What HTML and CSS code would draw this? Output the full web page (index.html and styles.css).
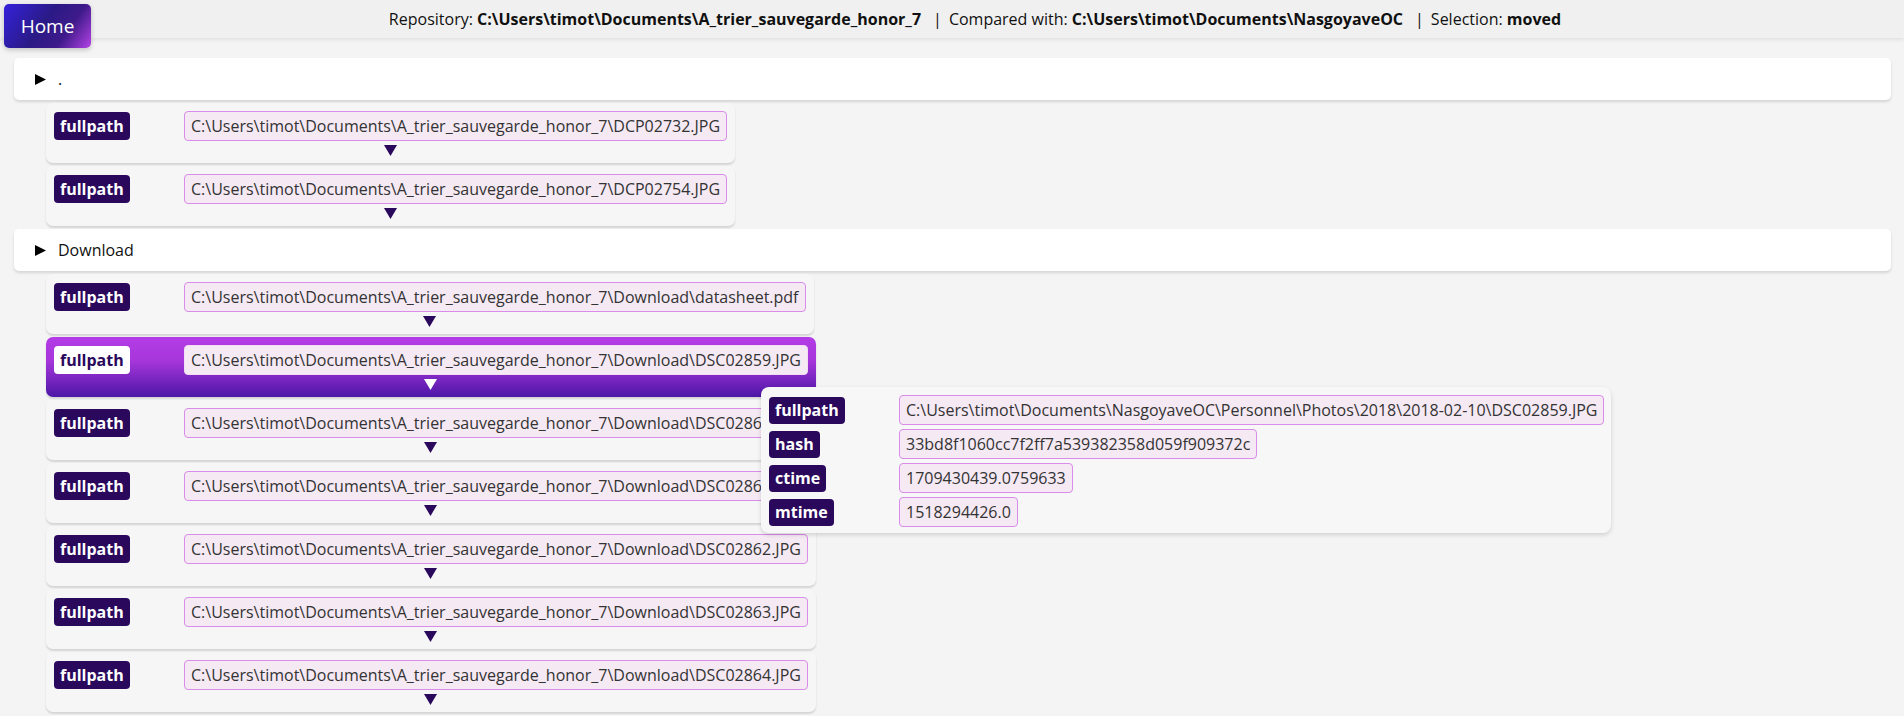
FILE: index.html
```html
<!DOCTYPE html>
<html>
<head>
<meta charset="utf-8">
<link rel="stylesheet" href="styles.css">
</head>
<body>
<header class="topbar">
  <a class="home">Home</a>
  <div class="info">
    <span>Repository: <b>C:\Users\timot\Documents\A_trier_sauvegarde_honor_7</b></span>
    <span class="sep">|</span>
    <span>Compared with: <b>C:\Users\timot\Documents\NasgoyaveOC</b></span>
    <span class="sep">|</span>
    <span>Selection: <b>moved</b></span>
  </div>
</header>
<main class="content">
  <div class="folder"><svg class="tri" viewBox="0 0 11 11" width="11" height="11"><polygon points="0,0 11,5.5 0,11" fill="#000"/></svg><span>.</span></div>
  <div class="files">
    <div class="card"><div class="row"><span class="badge">fullpath</span><span class="val">C:\Users\timot\Documents\A_trier_sauvegarde_honor_7\DCP02732.JPG</span></div><div class="arrow"><svg viewBox="0 0 13 11" width="13" height="11"><polygon points="0,0 13,0 6.5,11"/></svg></div></div>
    <div class="card"><div class="row"><span class="badge">fullpath</span><span class="val">C:\Users\timot\Documents\A_trier_sauvegarde_honor_7\DCP02754.JPG</span></div><div class="arrow"><svg viewBox="0 0 13 11" width="13" height="11"><polygon points="0,0 13,0 6.5,11"/></svg></div></div>
  </div>
  <div class="folder"><svg class="tri" viewBox="0 0 11 11" width="11" height="11"><polygon points="0,0 11,5.5 0,11" fill="#000"/></svg><span>Download</span></div>
  <div class="files">
    <div class="card"><div class="row"><span class="badge">fullpath</span><span class="val">C:\Users\timot\Documents\A_trier_sauvegarde_honor_7\Download\datasheet.pdf</span></div><div class="arrow"><svg viewBox="0 0 13 11" width="13" height="11"><polygon points="0,0 13,0 6.5,11"/></svg></div></div>
    <div class="card selected"><div class="row"><span class="badge">fullpath</span><span class="val">C:\Users\timot\Documents\A_trier_sauvegarde_honor_7\Download\DSC02859.JPG</span></div><div class="arrow"><svg viewBox="0 0 13 11" width="13" height="11"><polygon points="0,0 13,0 6.5,11"/></svg></div></div>
    <div class="card"><div class="row"><span class="badge">fullpath</span><span class="val">C:\Users\timot\Documents\A_trier_sauvegarde_honor_7\Download\DSC02860.JPG</span></div><div class="arrow"><svg viewBox="0 0 13 11" width="13" height="11"><polygon points="0,0 13,0 6.5,11"/></svg></div></div>
    <div class="card"><div class="row"><span class="badge">fullpath</span><span class="val">C:\Users\timot\Documents\A_trier_sauvegarde_honor_7\Download\DSC02861.JPG</span></div><div class="arrow"><svg viewBox="0 0 13 11" width="13" height="11"><polygon points="0,0 13,0 6.5,11"/></svg></div></div>
    <div class="card"><div class="row"><span class="badge">fullpath</span><span class="val">C:\Users\timot\Documents\A_trier_sauvegarde_honor_7\Download\DSC02862.JPG</span></div><div class="arrow"><svg viewBox="0 0 13 11" width="13" height="11"><polygon points="0,0 13,0 6.5,11"/></svg></div></div>
    <div class="card"><div class="row"><span class="badge">fullpath</span><span class="val">C:\Users\timot\Documents\A_trier_sauvegarde_honor_7\Download\DSC02863.JPG</span></div><div class="arrow"><svg viewBox="0 0 13 11" width="13" height="11"><polygon points="0,0 13,0 6.5,11"/></svg></div></div>
    <div class="card"><div class="row"><span class="badge">fullpath</span><span class="val">C:\Users\timot\Documents\A_trier_sauvegarde_honor_7\Download\DSC02864.JPG</span></div><div class="arrow"><svg viewBox="0 0 13 11" width="13" height="11"><polygon points="0,0 13,0 6.5,11"/></svg></div></div>
    <div class="card"><div class="row"><span class="badge">fullpath</span><span class="val">C:\Users\timot\Documents\A_trier_sauvegarde_honor_7\Download\DSC02865.JPG</span></div><div class="arrow"><svg viewBox="0 0 13 11" width="13" height="11"><polygon points="0,0 13,0 6.5,11"/></svg></div></div>
  </div>
  <div class="tooltip">
    <div class="row"><span class="badge">fullpath</span><span class="val">C:\Users\timot\Documents\NasgoyaveOC\Personnel\Photos\2018\2018-02-10\DSC02859.JPG</span></div>
    <div class="row"><span class="badge">hash</span><span class="val">33bd8f1060cc7f2ff7a539382358d059f909372c</span></div>
    <div class="row"><span class="badge">ctime</span><span class="val">1709430439.0759633</span></div>
    <div class="row"><span class="badge">mtime</span><span class="val">1518294426.0</span></div>
  </div>
</main>
</body>
</html>
```
FILE: styles.css
```css
html, body {
  margin: 0;
  padding: 0;
}
body {
  background: #f4f4f4;
  font-family: "Open Sans", "Noto Sans", sans-serif;
  font-size: 16px;
  color: #111;
  height: 716px;
  overflow: hidden;
}
.topbar {
  position: relative;
  height: 38px;
  background: #f0f0f0;
  box-shadow: 0 2px 4px rgba(0,0,0,0.08);
  display: flex;
  align-items: center;
  justify-content: center;
  z-index: 2;
}
.home {
  position: absolute;
  left: 4px;
  top: 4px;
  width: 87px;
  height: 44px;
  border-radius: 5px;
  background: linear-gradient(125deg, #3522dc 0%, #2a1a86 45%, #3e1a8a 70%, #b443e6 100%);
  color: #fff;
  font-size: 19px;
  display: flex;
  align-items: center;
  justify-content: center;
  box-shadow: 0 2px 5px rgba(0,0,0,0.2);
}
.info {
  display: flex;
  gap: 7px;
  padding-left: 46px;
  white-space: nowrap;
}
.info b { font-weight: 700; }
.sep { margin-left: 5px; }
.content {
  position: relative;
  padding: 20px 13px 0 14px;
}
.folder {
  height: 42px;
  background: #fff;
  border-radius: 5px;
  box-shadow: 0 2px 3px rgba(0,0,0,0.13);
  display: flex;
  align-items: center;
  padding-left: 21px;
  gap: 12px;
  margin-bottom: 3px;
}
.tri { display: block; }
.files {
  display: flex;
  flex-direction: column;
  align-items: flex-start;
  gap: 3px;
  margin-left: 32px;
  margin-bottom: 3px;
}
.card {
  background: #f6f6f6;
  border-radius: 7px;
  box-shadow: 0 2px 2px rgba(0,0,0,0.13);
  padding: 8px 8px 2px 8px;
  height: 50px;
}
.row {
  display: grid;
  grid-template-columns: 130px auto;
  align-items: center;
}
.badge {
  justify-self: start;
  background: #2a085c;
  color: #fff;
  font-weight: 700;
  border-radius: 4px;
  height: 28px;
  line-height: 28px;
  padding: 0 6px;
}
.val {
  justify-self: start;
  height: 28px;
  line-height: 28px;
  padding: 0 6px;
  border: 1px solid #d98ce9;
  background: #f5e9f3;
  border-radius: 4px;
  color: #333;
  white-space: nowrap;
}
.arrow {
  display: flex;
  justify-content: center;
  padding-top: 4px;
  height: 16px;
  color: #2a085c;
}
.arrow svg { display: block; fill: currentColor; }
.card.selected {
  background: linear-gradient(to bottom, #b43ce6 0%, #a636da 40%, #4c16a6 100%);
}
.card.selected .badge {
  background: #fff;
  color: #2a085c;
}
.card.selected .val {
  border-color: #f3ddf3;
}
.card.selected .arrow { color: #fff; }
.tooltip {
  position: absolute;
  left: 761px;
  top: 349px;
  background: #f7f7f7;
  border-radius: 8px;
  box-shadow: 0 2px 4px rgba(0,0,0,0.15);
  padding: 8px 7px 6px 8px;
  display: flex;
  flex-direction: column;
  gap: 4px;
  z-index: 3;
}
.tooltip .badge {
  height: 27px;
  line-height: 27px;
}
```
